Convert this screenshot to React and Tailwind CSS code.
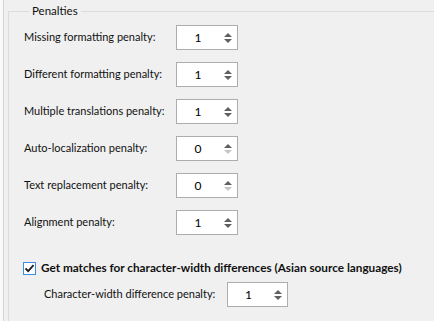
import React from "react";

function Spin({ value, downDisabled, w }) {
  return (
    <div className={`flex h-[25px] ${w} items-center border border-[#adadad] bg-white`}>
      <div className="flex-1 text-center text-[12px] leading-none text-black">{value}</div>
      <div className="flex w-[18px] flex-col items-center gap-[2px]">
        <svg width="8" height="4" viewBox="0 0 8 4">
          <path d="M4 0 L8 4 L0 4 Z" fill="#606060" />
        </svg>
        <svg width="8" height="4" viewBox="0 0 8 4">
          <path d="M0 0 L8 0 L4 4 Z" fill={downDisabled ? "#c6c6c6" : "#606060"} />
        </svg>
      </div>
    </div>
  );
}

const rows = [
  ["Missing formatting penalty:", "1", false],
  ["Different formatting penalty:", "1", false],
  ["Multiple translations penalty:", "1", false],
  ["Auto-localization penalty:", "0", true],
  ["Text replacement penalty:", "0", true],
  ["Alignment penalty:", "1", false],
];

export default function App() {
  return (
    <div
      className="flex h-[321px] w-[434px] overflow-hidden bg-[#f0f0f0] text-[11px] text-[#111]"
      style={{ fontFamily: 'Lato, "Noto Sans", sans-serif' }}
    >
      <div className="w-[3px] shrink-0 bg-[#f9f9f9]" />
      <div className="w-px shrink-0 bg-[#d4d4d4]" />
      <div className="w-[4px] shrink-0" />
      <fieldset className="mt-[3px] min-w-0 flex-1 border-l border-t border-[#dcdcdc] pl-[15px] pt-[6px]">
        <legend className="ml-[5px] px-[3px] text-[11.5px] leading-[16px]">Penalties</legend>
        <div className="flex flex-col gap-[12px]">
          {rows.map(([label, v, dd]) => (
            <div key={label} className="flex h-[25px] items-center">
              <div className="w-[152px] shrink-0 whitespace-nowrap">{label}</div>
              <Spin value={v} downDisabled={dd} w="w-[62px]" />
            </div>
          ))}
        </div>
        <div className="mt-[25px] flex h-[16px] items-center gap-[5px]">
          <div className="-ml-px flex h-[13px] w-[13px] shrink-0 items-center justify-center border border-[#3c8ce6] bg-white">
            <svg width="11" height="11" viewBox="0 0 11 11">
              <path d="M1.5 5.5 L4.2 8.2 L9.5 2.2" fill="none" stroke="#1f1f1f" strokeWidth="1.8" />
            </svg>
          </div>
          <div className="whitespace-nowrap text-[11.75px] font-bold">
            Get matches for character-width differences (Asian source languages)
          </div>
        </div>
        <div className="mt-[6px] flex h-[25px] items-center pl-[20px]">
          <div className="w-[183px] shrink-0 whitespace-nowrap">Character-width difference penalty:</div>
          <Spin value="1" downDisabled={false} w="w-[61px]" />
        </div>
      </fieldset>
    </div>
  );
}
